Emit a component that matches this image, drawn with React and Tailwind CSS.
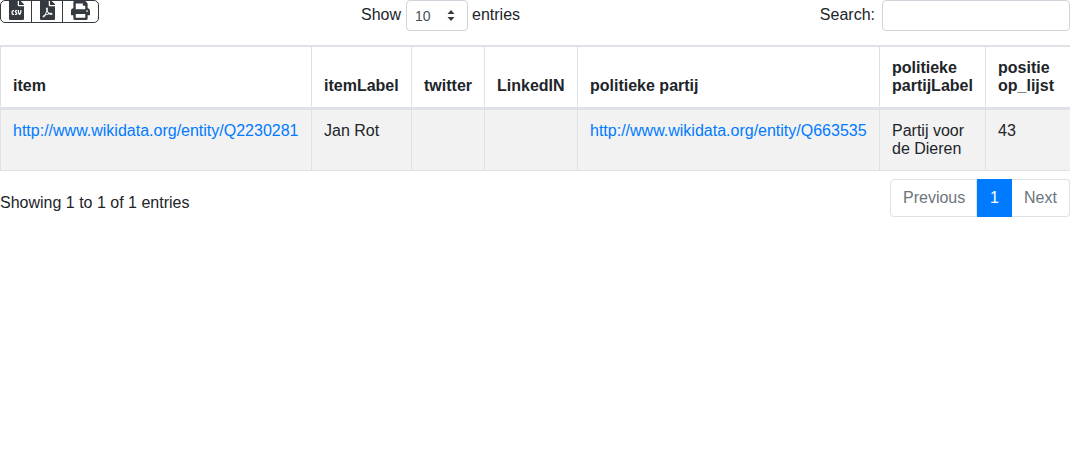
import { FaFileCsv, FaFilePdf, FaPrint } from 'react-icons/fa';

const columns = [
  { label: 'item', width: 'w-[311px]' },
  { label: 'itemLabel', width: 'w-[100px]' },
  { label: 'twitter', width: 'w-[73px]' },
  { label: 'LinkedIN', width: 'w-[93px]' },
  { label: 'politieke partij', width: 'w-[302px]' },
  { label: 'politieke partijLabel', width: 'w-[106px]' },
  { label: 'positie op_lijst', width: 'w-[85px]' },
];

const cell = 'border border-[#dee2e6] px-3 pt-3 pb-[12px] align-top';

export default function App() {
  return (
    <div className="w-[1070px] bg-white text-base leading-[18px] text-[#212529] font-['Liberation_Sans',Arial,sans-serif]">
      <div className="flex h-[45px] items-start">
        <div className="w-[361px]">
          <div className="inline-flex h-[23px] rounded-[5px] border border-[#343a40] text-[#343a40]">
            <span className="flex w-[31px] justify-center border-r border-[#343a40]">
              <FaFileCsv className="-mt-px h-5 w-[15px]" />
            </span>
            <span className="flex w-[31px] justify-center border-r border-[#343a40]">
              <FaFilePdf className="-mt-px h-5 w-[15px]" />
            </span>
            <span className="flex w-[35px] justify-center pr-px">
              <FaPrint className="h-[19px] w-[19px]" />
            </span>
          </div>
        </div>
        <div className="flex items-start">
          <span className="mr-[5px] leading-[30px]">Show</span>
          <div className="relative flex h-[31px] w-[62px] items-center rounded-[4px] border border-[#ced4da] pl-2 text-sm text-[#495057]">
            10
            <svg className="absolute right-[12px] top-[9px]" width="8" height="11" viewBox="0 0 8 11" fill="#343a40">
              <path d="M4 0 L7.5 4 H0.5 Z M4 11 L0.5 7 H7.5 Z" />
            </svg>
          </div>
          <span className="ml-1 leading-[30px]">entries</span>
        </div>
        <div className="flex flex-1 items-start justify-end">
          <span className="mr-[7px] leading-[30px]">Search:</span>
          <div className="h-[31px] w-[188px] rounded-[4px] border border-[#ced4da]" />
        </div>
      </div>

      <table className="w-[1070px] table-fixed border-collapse border-t-2 border-[#dee2e6]">
        <thead>
          <tr>
            {columns.map((col) => (
              <th key={col.label} className={`${col.width} border border-b-[3px] border-[#dee2e6] px-3 pt-3 pb-[12px] text-left align-bottom font-bold`}>
                {col.label}
              </th>
            ))}
          </tr>
        </thead>
        <tbody>
          <tr className="bg-[#f2f2f2]">
            <td className={cell}>
              <a className="text-[#007bff]">http://www.wikidata.org/entity/Q2230281</a>
            </td>
            <td className={cell}>Jan Rot</td>
            <td className={cell}></td>
            <td className={cell}></td>
            <td className={cell}>
              <a className="text-[#007bff]">http://www.wikidata.org/entity/Q663535</a>
            </td>
            <td className={cell}>Partij voor de Dieren</td>
            <td className={cell}>43</td>
          </tr>
        </tbody>
      </table>

      <div className="mt-2 flex items-start justify-between">
        <div className="pt-[15px]">Showing 1 to 1 of 1 entries</div>
        <div className="flex h-[38px] leading-6 text-[#6c757d]">
          <span className="w-[87px] rounded-l-[4px] border border-[#dee2e6] py-[6px] pl-3">Previous</span>
          <span className="w-[35px] bg-[#007bff] py-[7px] text-center text-white">1</span>
          <span className="w-[58px] rounded-r-[4px] border border-l-0 border-[#dee2e6] py-[6px] pl-3">Next</span>
        </div>
      </div>
    </div>
  );
}
